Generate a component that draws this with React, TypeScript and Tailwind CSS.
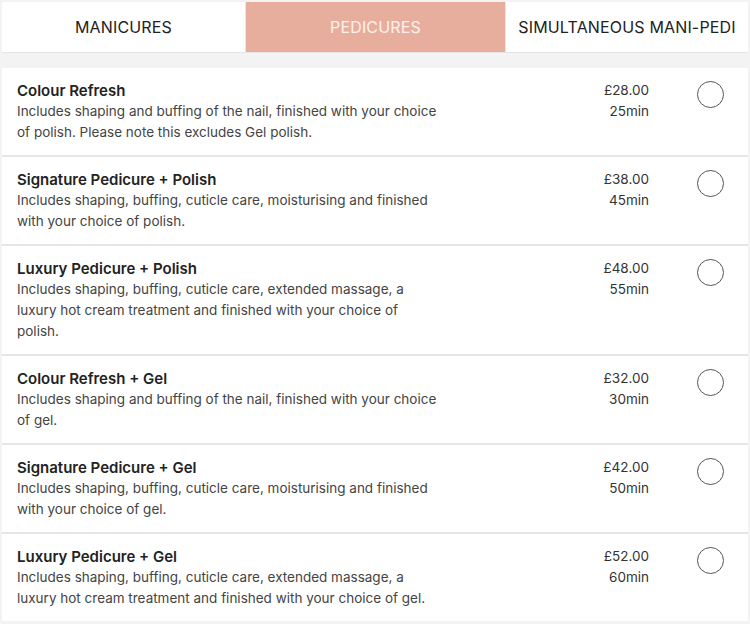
const services = [
  {
    name: "Colour Refresh",
    desc: "Includes shaping and buffing of the nail, finished with your choice of polish. Please note this excludes Gel polish.",
    price: "£28.00",
    time: "25min",
  },
  {
    name: "Signature Pedicure + Polish",
    desc: "Includes shaping, buffing, cuticle care, moisturising and finished with your choice of polish.",
    price: "£38.00",
    time: "45min",
  },
  {
    name: "Luxury Pedicure + Polish",
    desc: "Includes shaping, buffing, cuticle care, extended massage, a luxury hot cream treatment and finished with your choice of polish.",
    price: "£48.00",
    time: "55min",
  },
  {
    name: "Colour Refresh + Gel",
    desc: "Includes shaping and buffing of the nail, finished with your choice of gel.",
    price: "£32.00",
    time: "30min",
  },
  {
    name: "Signature Pedicure + Gel",
    desc: "Includes shaping, buffing, cuticle care, moisturising and finished with your choice of gel.",
    price: "£42.00",
    time: "50min",
  },
  {
    name: "Luxury Pedicure + Gel",
    desc: "Includes shaping, buffing, cuticle care, extended massage, a luxury hot cream treatment and finished with your choice of gel.",
    price: "£52.00",
    time: "60min",
  },
];

export default function App() {
  return (
    <div className="min-h-screen bg-[#f3f3f3] px-[2px] pt-[2px] font-['Inter',sans-serif]">
      {/* Tabs */}
      <div className="flex h-[51px] gap-[1px] bg-[#e6e6e6] border-b border-[#e6e6e6]">
        <button className="w-[243px] bg-white text-[16px] text-[#222] tracking-[0.01em]">MANICURES</button>
        <button className="w-[259px] bg-[#e8ae9d] text-[16px] text-[#fdf1ec] tracking-[0.01em]">PEDICURES</button>
        <button className="flex-1 bg-white text-[16px] text-[#222] tracking-[0.01em]">SIMULTANEOUS MANI-PEDI</button>
      </div>

      {/* Service list */}
      <div className="mt-[15px] flex flex-col gap-[2px] bg-[#e6e6e6]">
        {services.map((s) => (
          <div key={s.name} className="flex bg-white pl-[15px] py-3">
            <div className="w-[422px]">
              <div className="text-[15px] leading-[21px] font-semibold text-[#222]">{s.name}</div>
              <div className="text-[13.5px] leading-[21px] text-[#444]">{s.desc}</div>
            </div>
            <div className="ml-auto w-[60px] text-right text-[13.5px] leading-[21px] text-[#333]">
              <div>{s.price}</div>
              <div>{s.time}</div>
            </div>
            <div className="ml-[48px] mr-[24px] mt-[1px]">
              <div className="h-[27px] w-[27px] rounded-full border-[1.5px] border-[#555]" />
            </div>
          </div>
        ))}
      </div>
    </div>
  );
}
